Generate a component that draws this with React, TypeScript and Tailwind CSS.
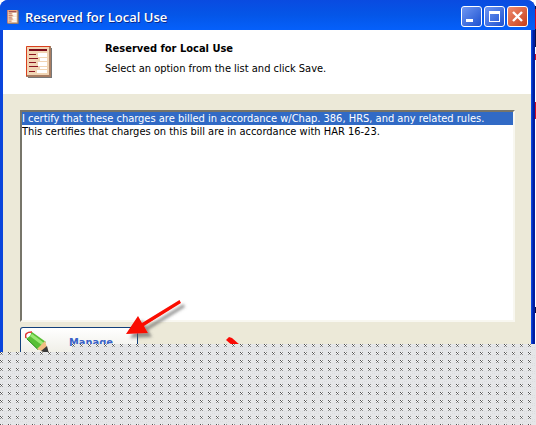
const listItems = [
  "I certify that these charges are billed in accordance w/Chap. 386, HRS, and any related rules.",
  "This certifies that charges on this bill are in accordance with HAR 16-23.",
]

function FormIcon({ className }: { className: string }) {
  return (
    <svg className={className} viewBox="0 0 26 32" aria-hidden="true">
      <path d="M2 2h24v30H2z" fill="#777" />
      <path d="M0 0h24v30H0z" fill="#f1d5b4" />
      <path d="M24 0v30H0" fill="none" stroke="#a87d62" strokeWidth="2" />
      <path d="M.5 30V.5h23.500" fill="none" stroke="#d9401f" strokeWidth="1" />
      <path d="M3 4h18" stroke="#7d0d1c" strokeWidth="2" />
      <path d="M12 7h9v4h-9zM14 12h7v3h-7zM12 16h9v4h-9zM14 21h7v2h-7zM11 24h10v3H11z" fill="#fff" />
      <path d="M3 8.500h7M3 12.500h9M3 16.500h7M3 20.500h9M3 25.500h6" stroke="#8b1520" strokeWidth="1" />
    </svg>
  )
}

function PencilIcon() {
  return (
    <svg className="h-6 w-6 shrink-0" viewBox="0 0 24 24" aria-hidden="true">
      <path d="M1 7L7 1L21 11L13 19z" fill="#58bf35" />
      <path d="M6 4L18 13" stroke="#9be873" strokeWidth="3" />
      <path d="M2 8L13 18.500" stroke="#2f8f25" strokeWidth="1" />
      <path d="M12 18L20 10L24 23z" fill="#f2bd83" />
      <path d="M16 20L22 15L24 23z" fill="#3a3a3a" />
      <path d="M1 7Q-1 1 7 1" fill="none" stroke="#e0302c" strokeWidth="1.500" />
      <path d="M2 7Q1 2 6 2Q6 5 2 7z" fill="#fff" />
    </svg>
  )
}

function TitleBar() {
  const button = "flex h-[21px] w-[21px] items-center justify-center rounded-[3px] border border-white"

  return (
    <header className="flex h-[30px] items-center gap-1 rounded-t-lg bg-linear-to-b from-[#0a4be0] via-[#0456e8] to-[#0560fb] px-[7px] pt-[3px]">
      <FormIcon className="h-[14px] w-[12px]" />
      <h1 className="grow pt-[3px] pl-[2px] font-['Open_Sans',sans-serif] text-[13px] font-semibold text-white [text-shadow:1px_1px_#0a2a8c]">
        Reserved for Local Use
      </h1>

      <div className="flex gap-[2px]">
        <button type="button" aria-label="Minimize" className={`${button} bg-linear-to-br from-[#6f96f2] to-[#1c50d0]`}>
          <svg className="h-[19px] w-[19px]" viewBox="0 0 19 19"><path d="M4 12h7v3H4z" fill="#fff" /></svg>
        </button>
        <button type="button" aria-label="Maximize" className={`${button} bg-linear-to-br from-[#6f96f2] to-[#1c50d0]`}>
          <svg className="h-[19px] w-[19px]" viewBox="0 0 19 19"><path d="M4 4h11v11H4zM5 7v7h9V7z" fill="#fff" fillRule="evenodd" /></svg>
        </button>
        <button type="button" aria-label="Close" className={`${button} bg-linear-to-br from-[#ee8a6c] to-[#c83c12]`}>
          <svg className="h-[19px] w-[19px]" viewBox="0 0 19 19"><path d="M5 5l9 9M14 5l-9 9" stroke="#fff" strokeWidth="2.4" /></svg>
        </button>
      </div>
    </header>
  )
}

// Red callout arrows lying over the window
function Arrows() {
  return (
    <svg className="pointer-events-none absolute top-[296px] left-[120px] h-[60px] w-[130px]" viewBox="0 0 130 60" aria-hidden="true">
      <defs>
        <filter id="shadow" x="-20%" y="-20%" width="150%" height="150%">
          <feDropShadow dx="4" dy="4" stdDeviation="1.500" floodColor="#555" floodOpacity="0.6" />
        </filter>
      </defs>
      <g filter="url(#shadow)" fill="#fa0a05">
        <path d="M59.500 4l1.500 3L24 30l4 7L6 38L18 20l4 7z" />
      </g>
      <path d="M109 41l3 1L128 56h-8L106 44z" fill="#fa0a05" />
    </svg>
  )
}

// Dotted area under the window, one step lower at its left end
function DottedArea() {
  return (
    <div className="relative -mt-2 grow bg-[#e5e6e8] [clip-path:polygon(0_8px,72px_8px,72px_0,100%_0,100%_100%,0_100%)]">
      <svg className="absolute inset-0 h-full w-full" aria-hidden="true">
        <defs>
          <pattern id="dots" width="8" height="8" patternUnits="userSpaceOnUse">
            <path d="M4 3h1v1H4zM6 3h1v1H6zM4 5h1v1H4zM6 5h1v1H6zM2 6h1v1H2z" fill="#dcdddf" />
            <path d="M0 0h1v1H0zM1 1h1v1H1z" fill="#505050" />
            <path d="M2 0h1v1H2zM0 2h1v1H0zM2 2h1v1H2z" fill="#909090" />
            <path d="M1 0h1v1H1zM0 1h1v1H0zM2 1h1v1H2z" fill="#fafafa" />
          </pattern>
        </defs>
        <rect width="100%" height="100%" fill="url(#dots)" />
      </svg>
    </div>
  )
}

export default function App() {
  return (
    <div className="relative flex min-h-screen flex-col bg-white font-['DejaVu_Sans_Condensed','DejaVu_Sans',sans-serif] text-[11px] text-black">
      <div className="flex">
        <main className="grow rounded-t-lg bg-linear-to-l from-[#001da0] from-[2px] to-[#0a45dc] to-[3px]">
          <TitleBar />

          <div className="mr-1 ml-[3px] bg-[#ece9d8]">
            <section className="flex h-16 bg-white pl-[23px]">
              <FormIcon className="mt-4 h-8 w-[26px]" />
              <div className="pt-[11px] pl-[53px]">
                <h2 className="leading-4 font-bold">Reserved for Local Use</h2>
                <p className="mt-1 leading-4">Select an option from the list and click Save.</p>
              </div>
            </section>

            <div className="pt-4 pr-4 pl-[17px]">
              <select
                size={2}
                aria-label="Certification text"
                defaultValue="0"
                className="block h-[212px] w-full appearance-none overflow-hidden border-2 border-t-[#77756a] border-r-[#f8f7f0] border-b-[#f8f7f0] border-l-[#77756a] bg-white outline-none"
              >
                {listItems.map((item, i) => (
                  <option
                    key={item}
                    value={i}
                    className="min-h-0 p-0 leading-[13px] checked:bg-[#316ac5] checked:bg-linear-to-r checked:from-[#316ac5] checked:to-[#316ac5] checked:text-white"
                  >
                    {item}
                  </option>
                ))}
              </select>

              <button
                type="button"
                className="mt-[5px] flex h-[25px] w-[118px] items-start overflow-hidden rounded-t-[3px] border border-b-0 border-[#12407c] bg-linear-to-b from-white to-[#f0efe8] pt-[3px] pl-1 font-bold text-[#3a62c8]"
              >
                <PencilIcon />
                <span className="grow pt-[2px] pr-1 leading-5">Manage</span>
              </button>
            </div>
          </div>
        </main>

        {/* sliver of the window behind */}
        <div className="w-px bg-[linear-gradient(#fff_6px,#101040_6px,#101040_9px,#d00a20_9px,#d00a20_29px,#101040_29px,#101040_47px,#fff_47px,#fff_54px,#d00a20_54px,#d00a20_60px,#fff_60px,#fff_102px,#d00a20_102px,#d00a20_119px,#fff_119px,#fff_307px,#101040_307px,#101040_313px,#fff_313px)]" />
      </div>

      <Arrows />
      <DottedArea />
    </div>
  )
}
